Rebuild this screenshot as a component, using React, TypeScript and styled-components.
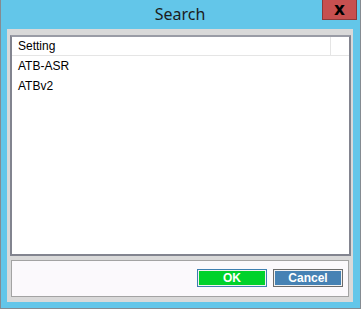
import React from 'react';
import styled, { createGlobalStyle } from 'styled-components';

const GlobalStyle = createGlobalStyle`
  html, body {
    margin: 0;
    padding: 0;
    background: #63c6e9;
  }
`;

const Window = styled.div`
  width: 361px;
  height: 309px;
  box-sizing: border-box;
  background: #63c6e9;
  border: 1px solid #858b91;
  border-top: none;
  display: flex;
  flex-direction: column;
  padding: 0 7px 6px 6px;
`;

const TitleBar = styled.div`
  height: 29px;
  display: flex;
  align-items: center;
  justify-content: center;
  position: relative;
  flex-shrink: 0;
`;

const Title = styled.span`
  font-family: "Noto Sans", "Open Sans", sans-serif;
  font-size: 16px;
  color: #1c1c1c;
  margin-top: -1px;
`;

const CloseButton = styled.div`
  position: absolute;
  top: 0;
  right: -4px;
  width: 35px;
  height: 20px;
  box-sizing: border-box;
  background: #c75050;
  border: 1px solid #8c3a3a;
  border-top: none;
  display: flex;
  align-items: center;
  justify-content: center;
  font-family: "DejaVu Sans", sans-serif;
  font-weight: bold;
  font-size: 17px;
  color: #000;
  line-height: 17px;
  padding-bottom: 1px;
`;

const Content = styled.div`
  flex: 1;
  background: #d9d9d9;
  display: flex;
  flex-direction: column;
  padding: 6px 2px 5px 3px;
  gap: 4px;
`;

const ListBox = styled.div`
  flex: 1;
  background: #fff;
  border: 2px solid #82848f;
  border-top-color: #9a9ca6;
  display: flex;
  flex-direction: column;
  font-family: "Liberation Sans", Arial, sans-serif;
  font-size: 12px;
  color: #000;
`;

const HeaderRow = styled.div`
  height: 18px;
  display: flex;
  border-bottom: 1px solid #e5e5e5;
`;

const HeaderCell = styled.div<{ $grow?: boolean }>`
  ${p => (p.$grow ? 'flex: 1;' : 'width: 18px;')}
  border-right: ${p => (p.$grow ? '1px solid #e5e5e5' : 'none')};
  padding-left: ${p => (p.$grow ? '6px' : '0')};
  display: flex;
  align-items: center;
`;

const Row = styled.div`
  height: 20px;
  display: flex;
  align-items: center;
  padding-left: 6px;
`;

const ButtonPanel = styled.div`
  height: 37px;
  box-sizing: border-box;
  margin: 0 2px 0 1px;
  background: #fbf9fc;
  border: 1px solid #a3a3a3;
  display: flex;
  align-items: center;
  justify-content: flex-end;
  gap: 6px;
  padding: 0 5px 1px 0;
`;

const DialogButton = styled.button<{ $fill: string; $edge: string }>`
  width: 70px;
  height: 18px;
  box-sizing: border-box;
  padding: 0;
  background: ${p => p.$fill};
  border: 1px solid ${p => p.$edge};
  box-shadow: inset 0 0 0 1px #f2f2f2;
  color: #fff;
  font-family: "Liberation Sans", Arial, sans-serif;
  font-weight: bold;
  font-size: 12px;
  line-height: 1;
`;

export default function App() {
  return (
    <>
      <GlobalStyle />
      <Window>
        <TitleBar>
          <Title>Search</Title>
          <CloseButton>x</CloseButton>
        </TitleBar>
        <Content>
          <ListBox>
            <HeaderRow>
              <HeaderCell $grow>Setting</HeaderCell>
              <HeaderCell />
            </HeaderRow>
            <Row>ATB-ASR</Row>
            <Row>ATBv2</Row>
          </ListBox>
          <ButtonPanel>
            <DialogButton $fill="#00d22b" $edge="#3d7fb0">OK</DialogButton>
            <DialogButton $fill="#4682b4" $edge="#6c6c6c">Cancel</DialogButton>
          </ButtonPanel>
        </Content>
      </Window>
    </>
  );
}
